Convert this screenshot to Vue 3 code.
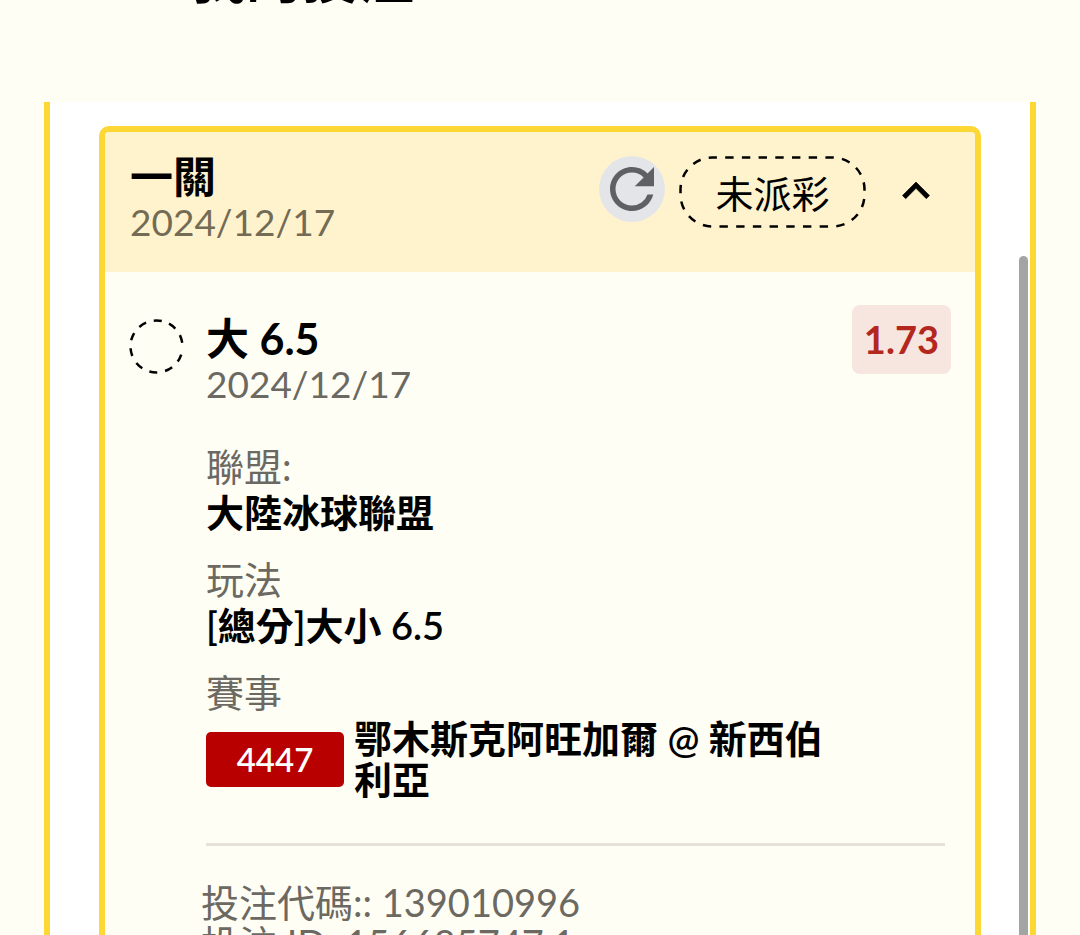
<script setup>
import { ref } from 'vue';

const open = ref(true);

const bet = {
  title: '一關',
  date: '2024/12/17',
  status: '未派彩',
};

const pick = {
  title: '大 6.5',
  date: '2024/12/17',
  odds: '1.73',
  matchNo: '4447',
  match: '鄂木斯克阿旺加爾 @ 新西伯利亞',
};

const details = [
  { label: '聯盟:', value: '大陸冰球聯盟' },
  { label: '玩法', value: '[總分]大小 6.5' },
];

const codes = ['投注代碼:: 139010996', '投注 ID: 156685747.1'];
</script>

<template>
  <div class="page">
    <header class="page-head">
      <h1 class="page-title">我的投注</h1>
    </header>

    <main class="panel">
      <article class="card">
        <div class="card-head">
          <div class="heading">
            <h2 class="title">{{ bet.title }}</h2>
            <p class="date">{{ bet.date }}</p>
          </div>
          <div class="actions">
            <button class="refresh" type="button" aria-label="重新整理">
              <svg viewBox="0 0 24 24" width="66" height="66">
                <path d="M17.65 6.35A7.96 7.96 0 0 0 12 4c-4.42 0-7.99 3.58-7.99 8s3.57 8 7.99 8c3.73 0 6.84-2.55 7.73-6h-2.08A5.99 5.99 0 0 1 12 18c-3.31 0-6-2.69-6-6s2.69-6 6-6c1.66 0 3.14.69 4.22 1.78L13 11h7V4l-2.35 2.35z" />
              </svg>
            </button>
            <span class="status">
              <svg class="outline" viewBox="0 0 187 72" width="187" height="72">
                <rect x="1.5" y="1.5" width="184" height="69" rx="32" />
              </svg>
              {{ bet.status }}
            </span>
            <button class="toggle" type="button" aria-label="收合" @click="open = !open">
              <svg viewBox="0 0 24 24" width="54" height="54">
                <path d="M12 8l-6 6 1.41 1.41L12 10.83l4.59 4.58L18 14z" />
              </svg>
            </button>
          </div>
        </div>

        <div v-if="open" class="card-body">
          <div class="pick">
            <svg class="pending" viewBox="0 0 55 55" width="55" height="55">
              <circle cx="27.5" cy="27.5" r="26" pathLength="164" transform="rotate(18 27.5 27.5)" />
            </svg>
            <div class="info">
              <h3 class="title">{{ pick.title }}</h3>
              <p class="date">{{ pick.date }}</p>
              <dl class="details">
                <div v-for="item in details" :key="item.label" class="detail">
                  <dt>{{ item.label }}</dt>
                  <dd>{{ item.value }}</dd>
                </div>
                <div class="detail">
                  <dt>賽事</dt>
                  <dd class="match">
                    <span class="match-no">{{ pick.matchNo }}</span>
                    <span class="teams">{{ pick.match }}</span>
                  </dd>
                </div>
              </dl>
            </div>
            <span class="odds">{{ pick.odds }}</span>
          </div>
          <hr class="divider" />
          <div class="codes">
            <p v-for="code in codes" :key="code">{{ code }}</p>
          </div>
        </div>
      </article>
      <div class="scroll-thumb"></div>
    </main>
  </div>
</template>

<style>
body {
  background: #fffef5;
}
</style>

<style scoped>
.page {
  display: flex;
  flex-direction: column;
  height: 100vh;
  overflow: hidden;
  background: #fffef5;
  color: #000;
  font-family: Lato, 'Noto Sans CJK TC', sans-serif;
  font-size: 38px;
}

h1,
h2,
h3,
p,
dl,
dd {
  margin: 0;
}

button {
  padding: 0;
  border: 0;
  background: none;
  cursor: pointer;
}

svg {
  display: block;
}

.page-head {
  display: flex;
  flex: none;
  align-items: flex-end;
  height: 9px;
  padding: 0 190px 93px;
}

.page-title {
  font-size: 56px;
  line-height: 64px;
}

.panel {
  position: relative;
  flex: 1;
  min-height: 0;
  margin: 0 44px;
  padding: 24px 49px 0;
  border: solid #fdd835;
  border-width: 0 6px;
  background: #fff;
}

.card {
  min-height: 100%;
  overflow: hidden;
  box-sizing: border-box;
  border: 6px solid #fdd835;
  border-radius: 10px;
  background: #fffef5;
}

.card-head {
  display: flex;
  justify-content: space-between;
  padding: 24px 32px 27px 25px;
  background: #fff3cd;
}

.title {
  font-size: 43px;
  line-height: 42px;
}

.date {
  color: #6b6962;
  font-size: 37px;
  line-height: 47px;
}

.card-head .date {
  color: #746b55;
}

.actions {
  display: flex;
  align-items: flex-start;
}

.refresh {
  width: 66px;
  height: 66px;
  margin-right: 14px;
  border-radius: 50%;
  background: #e3e5e9;
}

.refresh path {
  fill: #5f6062;
}

.status {
  position: relative;
  width: 187px;
  line-height: 74px;
  text-align: center;
}

.outline {
  position: absolute;
  top: 0;
  left: 0;
  fill: none;
  stroke: #000;
  stroke-width: 2.5;
  stroke-dasharray: 8.4 8.3;
  stroke-dashoffset: 4;
}

.toggle {
  margin: 8px 0 0 23px;
}

.toggle path {
  stroke: #000;
  stroke-width: 0.3;
}

.card-body {
  padding: 33px 24px 0 24px;
}

.pick {
  display: flex;
  align-items: flex-start;
}

.pending {
  flex: none;
  margin: 14px 22px 0 0;
  fill: none;
  stroke: #000;
  stroke-width: 2.5;
}

.pending circle {
  stroke-dasharray: 8 8 8 8 8 8 8 8 8 8 8 8 8 8 8 8 8 8 8 12;
}

.info {
  flex: 1;
  padding-top: 13px;
}

.odds {
  padding: 0 12px;
  border-radius: 8px;
  background: #f7e6df;
  color: #b4271e;
  font-weight: 700;
  line-height: 69px;
}

.details {
  padding-top: 36px;
}

.detail {
  margin-bottom: 20px;
  line-height: 46px;
}

.detail dt {
  color: #6b6962;
}

.detail dd {
  font-weight: 600;
  line-height: 47px;
}

.detail .match {
  display: flex;
  align-items: center;
  gap: 10px;
  padding-top: 3px;
  line-height: 41px;
}

.match-no {
  flex: none;
  width: 138px;
  border-radius: 5px;
  background: #b80000;
  color: #fff;
  font-size: 33px;
  font-weight: 600;
  line-height: 55px;
  text-align: center;
}

.divider {
  height: 3px;
  margin: 23px 6px 0 77px;
  border: 0;
  background: #e6e2da;
}

.codes {
  padding: 36px 0 0 72px;
  color: #6b6962;
  line-height: 41px;
}

.scroll-thumb {
  position: absolute;
  top: 154px;
  right: 2px;
  bottom: 0;
  width: 9px;
  border-radius: 5px 5px 0 0;
  background: #a3a4a4;
}
</style>
